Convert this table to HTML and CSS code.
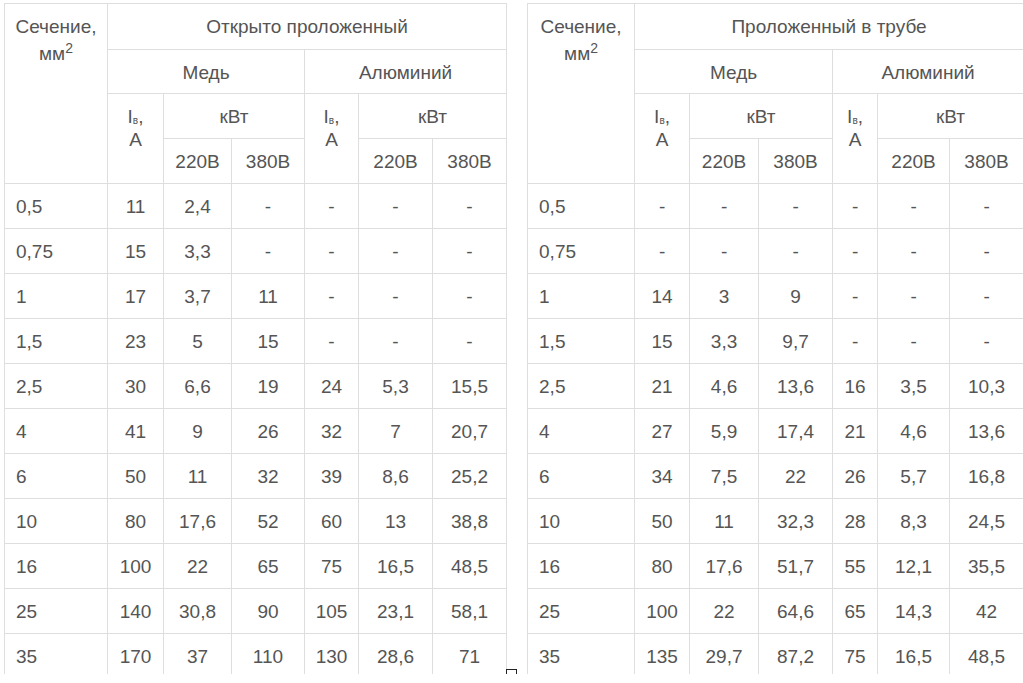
FILE: index.html
```html
<!DOCTYPE html>
<html lang="ru">
<head>
<meta charset="utf-8">
<title>Сечение кабеля</title>
<link rel="stylesheet" href="styles.css">
</head>
<body>
<div class="page">
  <div class="tables">
    <table class="grid grid-left">
      <colgroup>
        <col class="c1"><col class="c2"><col class="c3"><col class="c4"><col class="c5"><col class="c6"><col class="c7">
      </colgroup>
      <thead>
        <tr class="r1">
          <th rowspan="4" class="sec">Сечение,<br>мм<sup>2</sup></th>
          <th colspan="6">Открыто проложенный</th>
        </tr>
        <tr class="r2">
          <th colspan="3">Медь</th>
          <th colspan="3">Алюминий</th>
        </tr>
        <tr class="r3">
          <th rowspan="2" class="amp">I<sub>в</sub>,<br>A</th>
          <th colspan="2">кВт</th>
          <th rowspan="2" class="amp">I<sub>в</sub>,<br>A</th>
          <th colspan="2">кВт</th>
        </tr>
        <tr class="r4">
          <th>220В</th><th>380В</th><th>220В</th><th>380В</th>
        </tr>
      </thead>
      <tbody>
        <tr><td>0,5</td><td>11</td><td>2,4</td><td>-</td><td>-</td><td>-</td><td>-</td></tr>
        <tr><td>0,75</td><td>15</td><td>3,3</td><td>-</td><td>-</td><td>-</td><td>-</td></tr>
        <tr><td>1</td><td>17</td><td>3,7</td><td>11</td><td>-</td><td>-</td><td>-</td></tr>
        <tr><td>1,5</td><td>23</td><td>5</td><td>15</td><td>-</td><td>-</td><td>-</td></tr>
        <tr><td>2,5</td><td>30</td><td>6,6</td><td>19</td><td>24</td><td>5,3</td><td>15,5</td></tr>
        <tr><td>4</td><td>41</td><td>9</td><td>26</td><td>32</td><td>7</td><td>20,7</td></tr>
        <tr><td>6</td><td>50</td><td>11</td><td>32</td><td>39</td><td>8,6</td><td>25,2</td></tr>
        <tr><td>10</td><td>80</td><td>17,6</td><td>52</td><td>60</td><td>13</td><td>38,8</td></tr>
        <tr><td>16</td><td>100</td><td>22</td><td>65</td><td>75</td><td>16,5</td><td>48,5</td></tr>
        <tr><td>25</td><td>140</td><td>30,8</td><td>90</td><td>105</td><td>23,1</td><td>58,1</td></tr>
        <tr><td>35</td><td>170</td><td>37</td><td>110</td><td>130</td><td>28,6</td><td>71</td></tr>
      </tbody>
    </table>
    <table class="grid grid-right">
      <colgroup>
        <col class="c1"><col class="c2"><col class="c3"><col class="c4"><col class="c5"><col class="c6"><col class="c7">
      </colgroup>
      <thead>
        <tr class="r1">
          <th rowspan="4" class="sec">Сечение,<br>мм<sup>2</sup></th>
          <th colspan="6">Проложенный в трубе</th>
        </tr>
        <tr class="r2">
          <th colspan="3">Медь</th>
          <th colspan="3">Алюминий</th>
        </tr>
        <tr class="r3">
          <th rowspan="2" class="amp">I<sub>в</sub>,<br>A</th>
          <th colspan="2">кВт</th>
          <th rowspan="2" class="amp">I<sub>в</sub>,<br>A</th>
          <th colspan="2">кВт</th>
        </tr>
        <tr class="r4">
          <th>220В</th><th>380В</th><th>220В</th><th>380В</th>
        </tr>
      </thead>
      <tbody>
        <tr><td>0,5</td><td>-</td><td>-</td><td>-</td><td>-</td><td>-</td><td>-</td></tr>
        <tr><td>0,75</td><td>-</td><td>-</td><td>-</td><td>-</td><td>-</td><td>-</td></tr>
        <tr><td>1</td><td>14</td><td>3</td><td>9</td><td>-</td><td>-</td><td>-</td></tr>
        <tr><td>1,5</td><td>15</td><td>3,3</td><td>9,7</td><td>-</td><td>-</td><td>-</td></tr>
        <tr><td>2,5</td><td>21</td><td>4,6</td><td>13,6</td><td>16</td><td>3,5</td><td>10,3</td></tr>
        <tr><td>4</td><td>27</td><td>5,9</td><td>17,4</td><td>21</td><td>4,6</td><td>13,6</td></tr>
        <tr><td>6</td><td>34</td><td>7,5</td><td>22</td><td>26</td><td>5,7</td><td>16,8</td></tr>
        <tr><td>10</td><td>50</td><td>11</td><td>32,3</td><td>28</td><td>8,3</td><td>24,5</td></tr>
        <tr><td>16</td><td>80</td><td>17,6</td><td>51,7</td><td>55</td><td>12,1</td><td>35,5</td></tr>
        <tr><td>25</td><td>100</td><td>22</td><td>64,6</td><td>65</td><td>14,3</td><td>42</td></tr>
        <tr><td>35</td><td>135</td><td>29,7</td><td>87,2</td><td>75</td><td>16,5</td><td>48,5</td></tr>
      </tbody>
    </table>
  </div>
</div>
<div class="marker"></div>
</body>
</html>
```
FILE: styles.css
```css
html, body {
  margin: 0;
  padding: 0;
  background: #fff;
}
body {
  position: relative;
  font-family: "Liberation Sans", Arial, sans-serif;
  font-size: 19px;
  color: #555;
}
.page {
  box-sizing: border-box;
  height: 674px;
  overflow: hidden;
  padding: 3px 0 0 4px;
}
.tables {
  display: flex;
  gap: 20px;
  align-items: flex-start;
}
.grid {
  border-collapse: collapse;
  table-layout: fixed;
  flex: none;
}
.grid th,
.grid td {
  border: 1px solid #dedede;
  padding: 12px 6px 0;
  vertical-align: top;
  text-align: center;
  font-weight: normal;
  line-height: 22px;
  white-space: nowrap;
  overflow: hidden;
}
.grid th.sec {
  line-height: 27px;
  padding-top: 9px;
}
.grid th.amp {
  line-height: 23px;
  padding-top: 11px;
}
.grid tr { height: 45px; }
.grid tr.r1 { height: 46px; }
.grid tr.r2 { height: 44px; }
.grid tbody td:first-child {
  text-align: left;
  padding-left: 11px;
}
.grid sup {
  font-size: 14px;
  line-height: 0;
  vertical-align: 7px;
}
.grid sub {
  font-size: 10px;
  line-height: 0;
  vertical-align: -1px;
}

.grid-left { width: 502px; }
.grid-left .c1 { width: 103px; }
.grid-left .c2 { width: 56px; }
.grid-left .c3 { width: 68px; }
.grid-left .c4 { width: 73px; }
.grid-left .c5 { width: 54px; }
.grid-left .c6 { width: 74px; }
.grid-left .c7 { width: 74px; }

.grid-right { width: 496px; }
.grid-right .c1 { width: 107px; }
.grid-right .c2 { width: 55px; }
.grid-right .c3 { width: 69px; }
.grid-right .c4 { width: 74px; }
.grid-right .c5 { width: 45px; }
.grid-right .c6 { width: 72px; }
.grid-right .c7 { width: 74px; }

.marker {
  position: absolute;
  left: 506px;
  top: 669px;
  width: 9px;
  height: 10px;
  border: 1px solid #222;
  background: #fff;
}
```
